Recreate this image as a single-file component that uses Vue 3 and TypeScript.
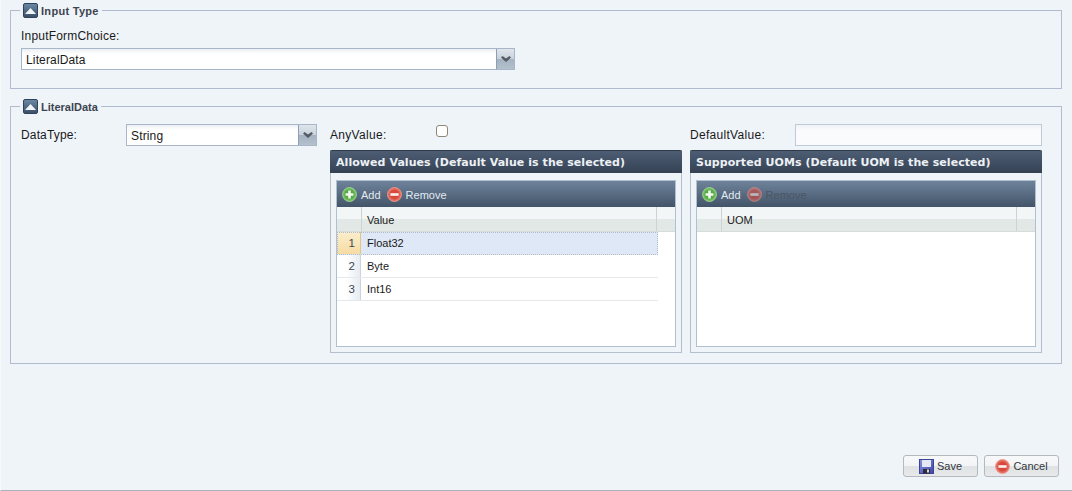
<script setup lang="ts">
import { ref } from 'vue'

interface GridPanel {
  title: string
  column: string
  rows: string[]
  removeEnabled: boolean
}

const panels: GridPanel[] = [
  {
    title: 'Allowed Values (Default Value is the selected)',
    column: 'Value',
    rows: ['Float32', 'Byte', 'Int16'],
    removeEnabled: true,
  },
  {
    title: 'Supported UOMs (Default UOM is the selected)',
    column: 'UOM',
    rows: [],
    removeEnabled: false,
  },
]

const anyValue = ref(false)
const defaultValue = ref('')
</script>

<template>
  <div class="page">
    <main class="main">
      <fieldset class="group group-input">
        <legend class="legend">
          <span class="toggle"><svg width="11" height="6" viewBox="0 0 11 6"><path d="M5.5 0 11 6H0z" fill="#f2f5f8" /></svg></span>
          <span class="legend-text wide">Input Type</span>
        </legend>
        <div class="field-label">InputFormChoice:</div>
        <div class="combo combo-wide">
          <span class="combo-text">LiteralData</span>
          <span class="combo-btn"><svg width="10" height="6" viewBox="0 0 10 6"><path d="M0 1.5 1.5 0 5 2.6 8.5 0 10 1.5 5 6z" fill="#555a62" /></svg></span>
        </div>
      </fieldset>

      <fieldset class="group group-data">
        <legend class="legend">
          <span class="toggle"><svg width="11" height="6" viewBox="0 0 11 6"><path d="M5.5 0 11 6H0z" fill="#f2f5f8" /></svg></span>
          <span class="legend-text">LiteralData</span>
        </legend>
        <div class="data-layout">
          <div class="type-col">
            <span class="type-label">DataType:</span>
            <div class="combo combo-type">
              <span class="combo-text">String</span>
              <span class="combo-btn"><svg width="10" height="6" viewBox="0 0 10 6"><path d="M0 1.5 1.5 0 5 2.6 8.5 0 10 1.5 5 6z" fill="#555a62" /></svg></span>
            </div>
          </div>

          <div class="any-row">
            <span class="row-label any-label">AnyValue:</span>
            <input v-model="anyValue" class="check" type="checkbox" />
          </div>
          <div class="default-row">
            <span class="row-label default-label">DefaultValue:</span>
            <input v-model="defaultValue" class="text-input" type="text" />
          </div>

          <section v-for="panel in panels" :key="panel.column" class="panel">
            <header class="panel-head">{{ panel.title }}</header>
            <div class="panel-body">
              <div class="grid">
                <div class="toolbar">
                  <button class="tool" type="button">
                    <svg class="tool-icon" width="15" height="15" viewBox="0 0 16 16">
                      <circle cx="8" cy="8" r="7.4" fill="#6cbb5c" stroke="#a5d596" stroke-width="1" />
                      <circle cx="8" cy="8" r="5.2" fill="#55a845" />
                      <path d="M6.6 3.8h2.8v2.8h2.8v2.8H9.4v2.8H6.6V9.4H3.8V6.6h2.8z" fill="#f2f8ef" />
                    </svg>
                    <span>Add</span>
                  </button>
                  <button class="tool" :class="{ disabled: !panel.removeEnabled }" type="button">
                    <svg class="tool-icon" width="15" height="15" viewBox="0 0 16 16">
                      <circle cx="8" cy="8" r="7.4" fill="#e5685c" stroke="#ee9d92" stroke-width="1" />
                      <circle cx="8" cy="8" r="5.2" fill="#d64a3e" />
                      <rect x="3.6" y="6.6" width="8.8" height="2.8" fill="#fbeeec" />
                    </svg>
                    <span>Remove</span>
                  </button>
                </div>
                <div class="grid-head">
                  <div class="cell-num"></div>
                  <div class="cell-title">{{ panel.column }}</div>
                  <div class="cell-rest"></div>
                </div>
                <div
                  v-for="(row, i) in panel.rows"
                  :key="row"
                  class="grid-row"
                  :class="{ selected: i === 0 }"
                >
                  <div class="row-num">{{ i + 1 }}</div>
                  <div class="row-value">{{ row }}</div>
                </div>
              </div>
            </div>
          </section>
        </div>
      </fieldset>
    </main>

    <footer class="footer">
      <button class="btn" type="button">
        <svg width="15" height="15" viewBox="0 0 15 15">
          <defs>
            <linearGradient id="disk" x1="0" y1="0" x2="1" y2="1">
              <stop offset="0" stop-color="#8a92e2" />
              <stop offset="1" stop-color="#3c44a8" />
            </linearGradient>
          </defs>
          <rect x="0.5" y="0.5" width="14" height="14" fill="url(#disk)" stroke="#3d4396" />
          <rect x="3" y="1" width="9" height="7" fill="#e4e8f4" />
          <rect x="4" y="10" width="7" height="4.5" fill="#2c2c3a" />
          <rect x="8" y="10.5" width="2" height="3" fill="#d8d8e0" />
        </svg>
        <span>Save</span>
      </button>
      <button class="btn" type="button">
        <svg width="15" height="15" viewBox="0 0 16 16">
          <circle cx="8" cy="8" r="7.4" fill="#e5685c" stroke="#ee9d92" stroke-width="1" />
          <circle cx="8" cy="8" r="5.2" fill="#d64a3e" />
          <rect x="3.6" y="6.6" width="8.8" height="2.8" fill="#fbeeec" />
        </svg>
        <span>Cancel</span>
      </button>
    </footer>
  </div>
</template>

<style>
html,
body {
  margin: 0;
  background: #eff4f9;
}
</style>

<style scoped>
.page {
  box-sizing: border-box;
  height: 491px;
  width: 1072px;
  display: flex;
  flex-direction: column;
  background: #eff4f9;
  border-left: 1px solid #f6f9fc;
  border-bottom: 1px solid #a9b1bb;
  font-family: 'Liberation Sans', Arial, sans-serif;
  font-size: 12px;
  color: #1a1a1a;
  overflow: hidden;
}

.main {
  flex: 1;
  padding: 3px 10px 0 9px;
}

.group {
  margin: 0;
  min-width: 0;
  border: 1px solid #b0bbcf;
  padding: 0 10px;
}

.group-input {
  height: 86px;
  box-sizing: border-box;
}

.group-data {
  margin-top: 10px;
  height: 265px;
  box-sizing: border-box;
}

.legend {
  display: flex;
  align-items: center;
  gap: 3px;
  margin-left: -1px;
  padding: 0 3px;
  height: 15px;
}

.toggle {
  width: 15px;
  height: 15px;
  box-sizing: border-box;
  display: flex;
  align-items: center;
  justify-content: center;
  border: 1px solid #2e4258;
  border-radius: 2px;
  background: linear-gradient(#6a87a3, #3b5168);
}

.legend-text {
  font-size: 11px;
  font-weight: bold;
  color: #3c4450;
}

.legend-text.wide {
  letter-spacing: 0.3px;
}

.field-label {
  margin-top: 11px;
  line-height: 15px;
  letter-spacing: 0.2px;
}

.combo {
  box-sizing: border-box;
  display: flex;
  align-items: stretch;
  height: 22px;
  border: 1px solid #a9b6ca;
  background: linear-gradient(#eceff3 0, #fff 5px);
}

.combo-wide {
  width: 494px;
  margin-top: 4px;
}

.combo-type {
  width: 191px;
}

.combo-text {
  flex: 1;
  padding-left: 4px;
  line-height: 22px;
  letter-spacing: 0.15px;
}

.combo-btn {
  width: 17px;
  display: flex;
  align-items: center;
  justify-content: center;
  border-left: 1px solid #8d9fb4;
  background: linear-gradient(#dfe5eb 0, #c8d2dc 50%, #a3b2c1 50%, #b4c1cd 100%);
}

.data-layout {
  display: grid;
  grid-template-columns: 309px 352px 352px;
  column-gap: 0;
  grid-template-rows: 26px 203px;
  margin-top: 10px;
}

.type-col {
  grid-row: 1 / span 2;
  display: flex;
  align-items: flex-start;
}

.type-label {
  width: 105px;
  line-height: 20px;
  padding-top: 1px;
  letter-spacing: 0.15px;
}

.any-row,
.default-row {
  display: flex;
  align-items: flex-start;
}

.row-label {
  line-height: 20px;
  padding-top: 1px;
  letter-spacing: 0.3px;
}

.any-label {
  width: 106px;
}

.check {
  width: 12px;
  height: 12px;
  margin: 1px 0 0;
  appearance: none;
  box-sizing: border-box;
  border: 1px solid #8f8678;
  border-radius: 3px;
  background: #fff;
}

.default-row {
  padding-left: 8px;
  margin-right: -8px;
}

.default-label {
  width: 105px;
}

.text-input {
  box-sizing: border-box;
  width: 247px;
  height: 22px;
  border: 1px solid #bccada;
  background: linear-gradient(#f0f3f6 0, #fafbfd 6px);
  outline: none;
}

.panel {
  box-sizing: border-box;
  width: 352px;
  height: 203px;
  display: flex;
  flex-direction: column;
  border: 1px solid #b4c0ce;
  border-top: 0;
}

.panel + .panel {
  width: 352px;
  margin-left: 8px;
}

.panel-head {
  flex: none;
  height: 23px;
  margin: 0 -1px;
  padding-left: 6px;
  line-height: 24px;
  font-family: 'DejaVu Sans', sans-serif;
  font-size: 11px;
  font-weight: bold;
  letter-spacing: 0.06px;
  color: #edf1f5;
  background: linear-gradient(#4d5d73, #354254);
  border-top: 1px solid #2f3a49;
  border-radius: 2px 2px 0 0;
  box-sizing: border-box;
  white-space: nowrap;
}

.panel-body {
  flex: 1;
  padding: 7px 5px 5px;
  display: flex;
  min-height: 0;
}

.grid {
  flex: 1;
  background: #fff;
  border: 1px solid #b1c0cf;
}

.toolbar {
  height: 26px;
  box-sizing: border-box;
  display: flex;
  align-items: center;
  gap: 6px;
  padding: 1px 0 0 5px;
  background: linear-gradient(#6e839b, #435468);
}

.tool {
  display: flex;
  align-items: center;
  gap: 4px;
  padding: 0;
  border: 0;
  background: none;
  font: inherit;
  font-size: 11px;
  color: #e2eaf2;
}

.tool.disabled span {
  color: #4b5666;
}

.tool.disabled .tool-icon {
  opacity: 0.6;
}

.grid-head {
  height: 25px;
  display: flex;
  background: linear-gradient(#f3f6f6 0, #f3f6f6 50%, #e2e8e6 50%, #e2e8e6 100%);
  border-bottom: 1px solid #d5dcdb;
  box-sizing: border-box;
  line-height: 26px;
}

.cell-num {
  width: 24px;
  border-right: 1px solid #ccd3d3;
}

.cell-title {
  width: 295px;
  padding-left: 5px;
  box-sizing: border-box;
  border-right: 1px solid #ccd3d3;
  font-size: 11px;
}

.cell-rest {
  flex: 1;
}

.grid-row {
  width: 321px;
  height: 23px;
  display: flex;
  box-sizing: border-box;
  border-bottom: 1px solid #e6e9ec;
  line-height: 22px;
  font-size: 11px;
}

.row-num {
  width: 24px;
  box-sizing: border-box;
  padding-right: 5px;
  text-align: right;
  font-size: 11.5px;
  color: #3b4654;
  background: linear-gradient(90deg, #fff 0, #fff 40%, #e6ecf1 100%);
  border-right: 1px solid #ccd3d9;
}

.row-value {
  padding-left: 6px;
  flex: 1;
}

.grid-row.selected {
  background: #dfe8f6;
  outline: 1px dotted #aebccb;
  outline-offset: -1px;
}

.grid-row.selected .row-num {
  background: linear-gradient(#fbedcb, #f6dca3);
  border-right-color: #e0c688;
}

.footer {
  flex: none;
  height: 43px;
  box-sizing: border-box;
  display: flex;
  justify-content: flex-end;
  align-items: flex-start;
  gap: 6px;
  margin-left: -1px;
  border-left: 1px solid #e4e7ea;
  padding: 8px 13px 0 0;
}

.btn {
  width: 75px;
  height: 22px;
  box-sizing: border-box;
  display: flex;
  align-items: center;
  justify-content: center;
  gap: 3px;
  padding: 0;
  border: 1px solid #b5b9bd;
  border-radius: 3px;
  background: linear-gradient(#f7f8f9 0, #f3f4f5 50%, #dfe2e4 50%, #e7e9ea 100%);
  font: inherit;
  font-size: 11px;
  color: #30363c;
}
</style>
